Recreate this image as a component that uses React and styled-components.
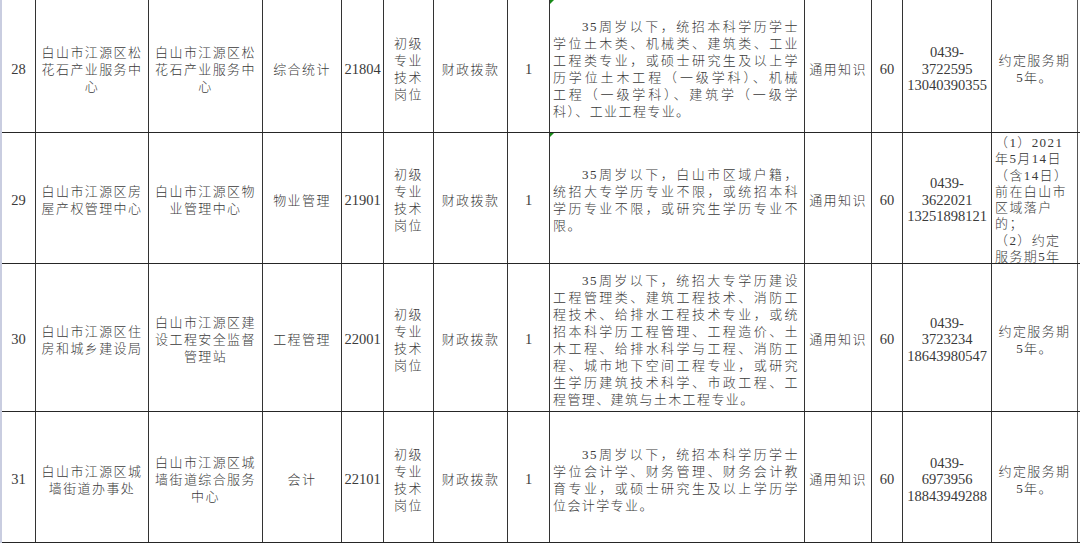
import React from "react";
import styled, { createGlobalStyle } from "styled-components";

const GlobalStyle = createGlobalStyle`
  html, body {
    margin: 0;
    padding: 0;
    background: #ffffff;
    overflow: hidden;
  }
  body {
    font-family: "Liberation Serif", "Noto Sans CJK SC", serif;
    color: #3a3a3a;
  }
`;

const COLUMNS = "34px 113px 114px 79px 42px 50px 74px 42px 255px 67px 31px 89px 86px";

const rows = [
  {
    height: 133,
    shift: 6,
    no: "28",
    dept: ["白山市江源区松", "花石产业服务中", "心"],
    unit: ["白山市江源区松", "花石产业服务中", "心"],
    post: "综合统计",
    code: "21804",
    desc: [
      "35周岁以下，统招本科学历学士",
      "学位土木类、机械类、建筑类、工业",
      "工程类专业，或硕士研究生及以上学",
      "历学位土木工程（一级学科）、机械",
      "工程（一级学科）、建筑学（一级学",
      "科）、工业工程专业。",
    ],
    phone: ["0439-", "3722595", "13040390355"],
    note: ["约定服务期", "5年。"],
    marker: true,
  },
  {
    height: 131,
    shift: 4,
    no: "29",
    dept: ["白山市江源区房", "屋产权管理中心"],
    unit: ["白山市江源区物", "业管理中心"],
    post: "物业管理",
    code: "21901",
    desc: [
      "35周岁以下，白山市区域户籍，",
      "统招大专学历专业不限，或统招本科",
      "学历专业不限，或研究生学历专业不",
      "限。",
    ],
    phone: ["0439-", "3622021", "13251898121"],
    note: [
      "（1）2021",
      "年5月14日",
      "（含14日）",
      "前在白山市",
      "区域落户",
      "的；",
      "（2）约定",
      "服务期5年",
      "。",
    ],
    noteTop: true,
    marker: true,
  },
  {
    height: 148,
    shift: 4,
    no: "30",
    dept: ["白山市江源区住", "房和城乡建设局"],
    unit: ["白山市江源区建", "设工程安全监督", "管理站"],
    post: "工程管理",
    code: "22001",
    desc: [
      "35周岁以下，统招大专学历建设",
      "工程管理类、建筑工程技术、消防工",
      "程技术、给排水工程技术专业，或统",
      "招本科学历工程管理、工程造价、土",
      "木工程、给排水科学与工程、消防工",
      "程、城市地下空间工程专业，或研究",
      "生学历建筑技术科学、市政工程、工",
      "程管理、建筑与土木工程专业。",
    ],
    phone: ["0439-", "3723234", "18643980547"],
    note: ["约定服务期", "5年。"],
  },
  {
    height: 131,
    shift: 5,
    no: "31",
    dept: ["白山市江源区城", "墙街道办事处"],
    unit: ["白山市江源区城", "墙街道综合服务", "中心"],
    post: "会计",
    code: "22101",
    desc: [
      "35周岁以下，统招本科学历学士",
      "学位会计学、财务管理、财务会计教",
      "育专业，或硕士研究生及以上学历学",
      "位会计学专业。",
    ],
    phone: ["0439-", "6973956", "18843949288"],
    note: ["约定服务期", "5年。"],
  },
];

export default function App() {
  return (
    <>
      <GlobalStyle />
      <Sheet>
        {rows.map((r) => (
          <Row key={r.no} $h={r.height} $shift={r.shift}>
            <Cell>
              <Num>{r.no}</Num>
            </Cell>
            <Cell>
              <Lines lines={r.dept} />
            </Cell>
            <Cell>
              <Lines lines={r.unit} />
            </Cell>
            <Cell>
              <Text>{r.post}</Text>
            </Cell>
            <Cell>
              <Num>{r.code}</Num>
            </Cell>
            <Cell>
              <Lines lines={["初级", "专业", "技术", "岗位"]} />
            </Cell>
            <Cell>
              <Text>财政拨款</Text>
            </Cell>
            <Cell>
              <Num>1</Num>
            </Cell>
            <Cell>
              {r.marker ? <Marker /> : null}
              <Desc>
                {r.desc.map((line, i) => (
                  <DescLine
                    key={i}
                    $first={i === 0}
                    $last={i === r.desc.length - 1}
                  >
                    {line}
                  </DescLine>
                ))}
              </Desc>
            </Cell>
            <Cell>
              <Text>通用知识</Text>
            </Cell>
            <Cell>
              <Num>60</Num>
            </Cell>
            <Cell>
              <Num>
                {r.phone.map((p, i) => (
                  <div key={i}>{p}</div>
                ))}
              </Num>
            </Cell>
            <Cell $top={r.noteTop} $last>
              {r.noteTop ? (
                <Note>
                  {r.note.map((n, i) => (
                    <div key={i}>{n}</div>
                  ))}
                </Note>
              ) : (
                <Lines lines={r.note} />
              )}
            </Cell>
          </Row>
        ))}
      </Sheet>
    </>
  );
}

function Lines({ lines }) {
  return (
    <Text>
      {lines.map((l, i) => (
        <div key={i}>{l}</div>
      ))}
    </Text>
  );
}

const Sheet = styled.div`
  width: 1078px;
  border-left: 2px solid #c9cde0;
`;

const Row = styled.div`
  display: grid;
  grid-template-columns: ${COLUMNS};
  height: ${(p) => p.$h}px;
  box-sizing: border-box;
  border-bottom: 1px solid #262626;

  & > div {
    padding-top: ${(p) => p.$shift}px;
  }
`;

const Cell = styled.div`
  position: relative;
  display: flex;
  align-items: ${(p) => (p.$top ? "flex-start" : "center")};
  justify-content: center;
  box-sizing: border-box;
  border-right: 1px solid ${(p) => (p.$last ? "#555" : "#333")};
  overflow: hidden;
  text-align: center;
`;

const Text = styled.div`
  font-size: 13px;
  letter-spacing: 1.4px;
  line-height: 17px;
  font-weight: 300;
`;

const Num = styled.div`
  font-size: 14.5px;
  line-height: 16.5px;
  letter-spacing: 0;
`;

const Desc = styled.div`
  width: 100%;
  box-sizing: border-box;
  padding: 0 5px 0 3px;
  font-size: 13px;
  letter-spacing: 1.4px;
  line-height: 17px;
  font-weight: 300;
`;

const DescLine = styled.div`
  text-align: justify;
  text-align-last: ${(p) => (p.$last ? "left" : "justify")};
  text-indent: ${(p) => (p.$first ? "29px" : "0")};
`;

const Note = styled.div`
  width: 100%;
  box-sizing: border-box;
  margin-top: -2px;
  padding: 0 2px 0 3px;
  text-align: left;
  font-size: 13px;
  letter-spacing: 1.4px;
  line-height: 16.3px;
  font-weight: 300;
`;

const Marker = styled.span`
  position: absolute;
  top: 0;
  left: 0;
  width: 0;
  height: 0;
  border-top: 4px solid #178a17;
  border-right: 4px solid transparent;
`;
